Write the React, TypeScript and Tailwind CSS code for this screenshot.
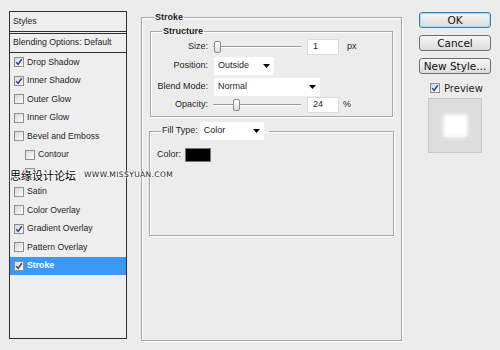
import React from 'react';

type Effect = { label: string; checked: boolean; indent?: boolean; active?: boolean; hidden?: boolean };

const effects: Effect[] = [
  { label: 'Drop Shadow', checked: true },
  { label: 'Inner Shadow', checked: true },
  { label: 'Outer Glow', checked: false },
  { label: 'Inner Glow', checked: false },
  { label: 'Bevel and Emboss', checked: false },
  { label: 'Contour', checked: false, indent: true },
  // covered by the watermark in the screenshot
  { label: 'Texture', checked: false, indent: true, hidden: true },
  { label: 'Satin', checked: false },
  { label: 'Color Overlay', checked: false },
  { label: 'Gradient Overlay', checked: true },
  { label: 'Pattern Overlay', checked: false },
  { label: 'Stroke', checked: true, active: true },
];

function CheckBox({ checked }: { checked: boolean }) {
  return (
    <span className="flex h-[10px] w-[10px] shrink-0 items-center justify-center border border-[#8e8f8f] bg-gradient-to-br from-[#d6d6d6] to-white">
      {checked && (
        <svg width="8" height="8" viewBox="0 0 8 8">
          <path d="M1.2 4.2 L3.2 6.4 L6.8 1.2" fill="none" stroke="#24479b" strokeWidth="1.5" />
        </svg>
      )}
    </span>
  );
}

function Slider({ at }: { at: number }) {
  return (
    <div className="relative h-[12px] w-[88px]">
      <div className="absolute left-0 right-0 top-[5px] h-px bg-[#9a9a9a]" />
      <div className="absolute left-0 right-0 top-[6px] h-px bg-white" />
      <div
        className="absolute top-0 h-[12px] w-[7px] rounded-[2px] border border-[#8a8a8a] bg-gradient-to-b from-white to-[#dedede]"
        style={{ left: at }}
      />
    </div>
  );
}

function Field({ value }: { value: string }) {
  return (
    <div className="flex h-[16px] w-[32px] items-center border border-[#dcdcdc] bg-white pl-[5px]">{value}</div>
  );
}

function Dropdown({ value, width }: { value: string; width: string }) {
  return (
    <div className={`flex h-[18px] items-center justify-between bg-white pl-[4px] pr-[4px] ${width}`}>
      <span>{value}</span>
      <svg width="7" height="4" viewBox="0 0 7 4">
        <path d="M0 0 H7 L3.5 4 Z" fill="#000" />
      </svg>
    </div>
  );
}

function DialogButton({ children, primary }: { children: React.ReactNode; primary?: boolean }) {
  return (
    <div
      className={`flex h-[16px] w-[72px] items-center justify-center rounded-[3px] border bg-gradient-to-b from-[#f6f6f6] to-[#dcdcdc] font-['DejaVu_Sans',sans-serif] text-[10.5px] leading-none text-[#111] ${
        primary ? 'border-[#3c7fb1] shadow-[inset_0_0_0_1px_#a8d8f0]' : 'border-[#707070]'
      }`}
    >
      {children}
    </div>
  );
}

export default function App() {
  return (
    <div className="relative flex h-[350px] w-[500px] bg-[#ececec] pl-[9px] pt-[11px] font-['Liberation_Sans',Arial,sans-serif] text-[9px] text-[#1e1e1e]">
      {/* effects list */}
      <div className="flex h-[328px] w-[118px] flex-col border border-[#2e2e2e] bg-[#eeeeee] text-[8.7px]">
        <div className="flex h-[20px] items-center border-b border-[#2e2e2e] pl-[3px]">Styles</div>
        <div className="mt-px flex h-[20px] items-center border-y border-[#2e2e2e] pl-[3px]">
          Blending Options: Default
        </div>
        {effects.map((e) => (
          <div
            key={e.label}
            className={`flex h-[18.5px] items-center gap-[3px] ${e.indent ? 'pl-[15px]' : 'pl-[4px]'} ${
              e.active ? 'bg-[#3a98f8] font-bold text-white' : ''
            }`}
          >
            <CheckBox checked={e.checked} />
            {!e.hidden && <span>{e.label}</span>}
          </div>
        ))}
      </div>

      {/* stroke settings */}
      <fieldset className="ml-[14px] h-[330px] w-[261px] border border-[#a6a6a6] shadow-[1px_1px_0_#fff,inset_1px_1px_0_#fff]">
        <legend className="ml-[12px] px-px font-bold leading-[12px]">Stroke</legend>

        <fieldset className="mx-[8px] mt-[2px] h-[92px] border border-[#a6a6a6] shadow-[1px_1px_0_#fff,inset_1px_1px_0_#fff]">
          <legend className="ml-[11px] px-px font-bold leading-[12px]">Structure</legend>
          <div className="mt-px flex h-[17px] items-center">
            <span className="w-[57px] text-right">Size:</span>
            <div className="ml-[5px]">
              <Slider at={1} />
            </div>
            <div className="ml-[6px]">
              <Field value="1" />
            </div>
            <span className="ml-[8px]">px</span>
          </div>
          <div className="mt-[2px] flex h-[18px] items-center">
            <span className="w-[57px] text-right">Position:</span>
            <div className="ml-[6px]">
              <Dropdown value="Outside" width="w-[60px]" />
            </div>
          </div>
          <div className="mt-[3px] flex h-[18px] items-center">
            <span className="w-[57px] text-right">Blend Mode:</span>
            <div className="ml-[6px]">
              <Dropdown value="Normal" width="w-[106px]" />
            </div>
          </div>
          <div className="mt-px flex h-[16px] items-center">
            <span className="w-[57px] text-right">Opacity:</span>
            <div className="ml-[5px]">
              <Slider at={20} />
            </div>
            <div className="ml-[6px]">
              <Field value="24" />
            </div>
            <span className="ml-[4px]">%</span>
          </div>
        </fieldset>

        <fieldset className="ml-[7px] mt-[5px] h-[114px] w-[245px] border border-[#a6a6a6] shadow-[1px_1px_0_#fff,inset_1px_1px_0_#fff]">
          <legend className="ml-[11px] flex items-center pl-px pr-[5px]">
            <span>Fill Type:</span>
            <div className="ml-[2px]">
              <Dropdown value="Color" width="w-[64px]" />
            </div>
          </legend>
          <div className="mt-[8px] flex h-[14px] items-center pl-[7px]">
            <span>Color:</span>
            <div className="ml-[4px] h-[14px] w-[26px] border border-[#777] bg-black" />
          </div>
        </fieldset>
      </fieldset>

      {/* buttons and preview */}
      <div className="ml-[17px] mt-px flex w-[72px] flex-col">
        <DialogButton primary>OK</DialogButton>
        <div className="mt-[7px]">
          <DialogButton>Cancel</DialogButton>
        </div>
        <div className="mt-[7px]">
          <DialogButton>New Style...</DialogButton>
        </div>
        <div className="mt-[9px] flex h-[10px] items-center gap-[4px] pl-[11px] font-['DejaVu_Sans',sans-serif] text-[10px]">
          <CheckBox checked />
          <span>Preview</span>
        </div>
        <div className="ml-[9px] mt-[5px] flex h-[55px] w-[54px] items-center justify-center border border-[#c9c9c9] bg-[#dddddd]">
          <div className="h-[26px] w-[27px] bg-white shadow-[inset_0_0_5px_#c4c4c4,0_0_2px_#f4f4f4]" />
        </div>
      </div>

      {/* watermark */}
      <div className="absolute left-[10px] top-[169px] flex items-center [text-shadow:0_0_2px_#fff,0_0_2px_#fff,0_0_3px_#fff]">
        <span className="font-['Noto_Sans_CJK_SC',sans-serif] text-[11px] leading-[12px] text-black">思缘设计论坛</span>
        <span className="ml-[8px] font-['DejaVu_Sans',sans-serif] text-[7.5px] leading-[12px] tracking-[0.4px] text-[#222]">
          WWW.MISSYUAN.COM
        </span>
      </div>
    </div>
  );
}
